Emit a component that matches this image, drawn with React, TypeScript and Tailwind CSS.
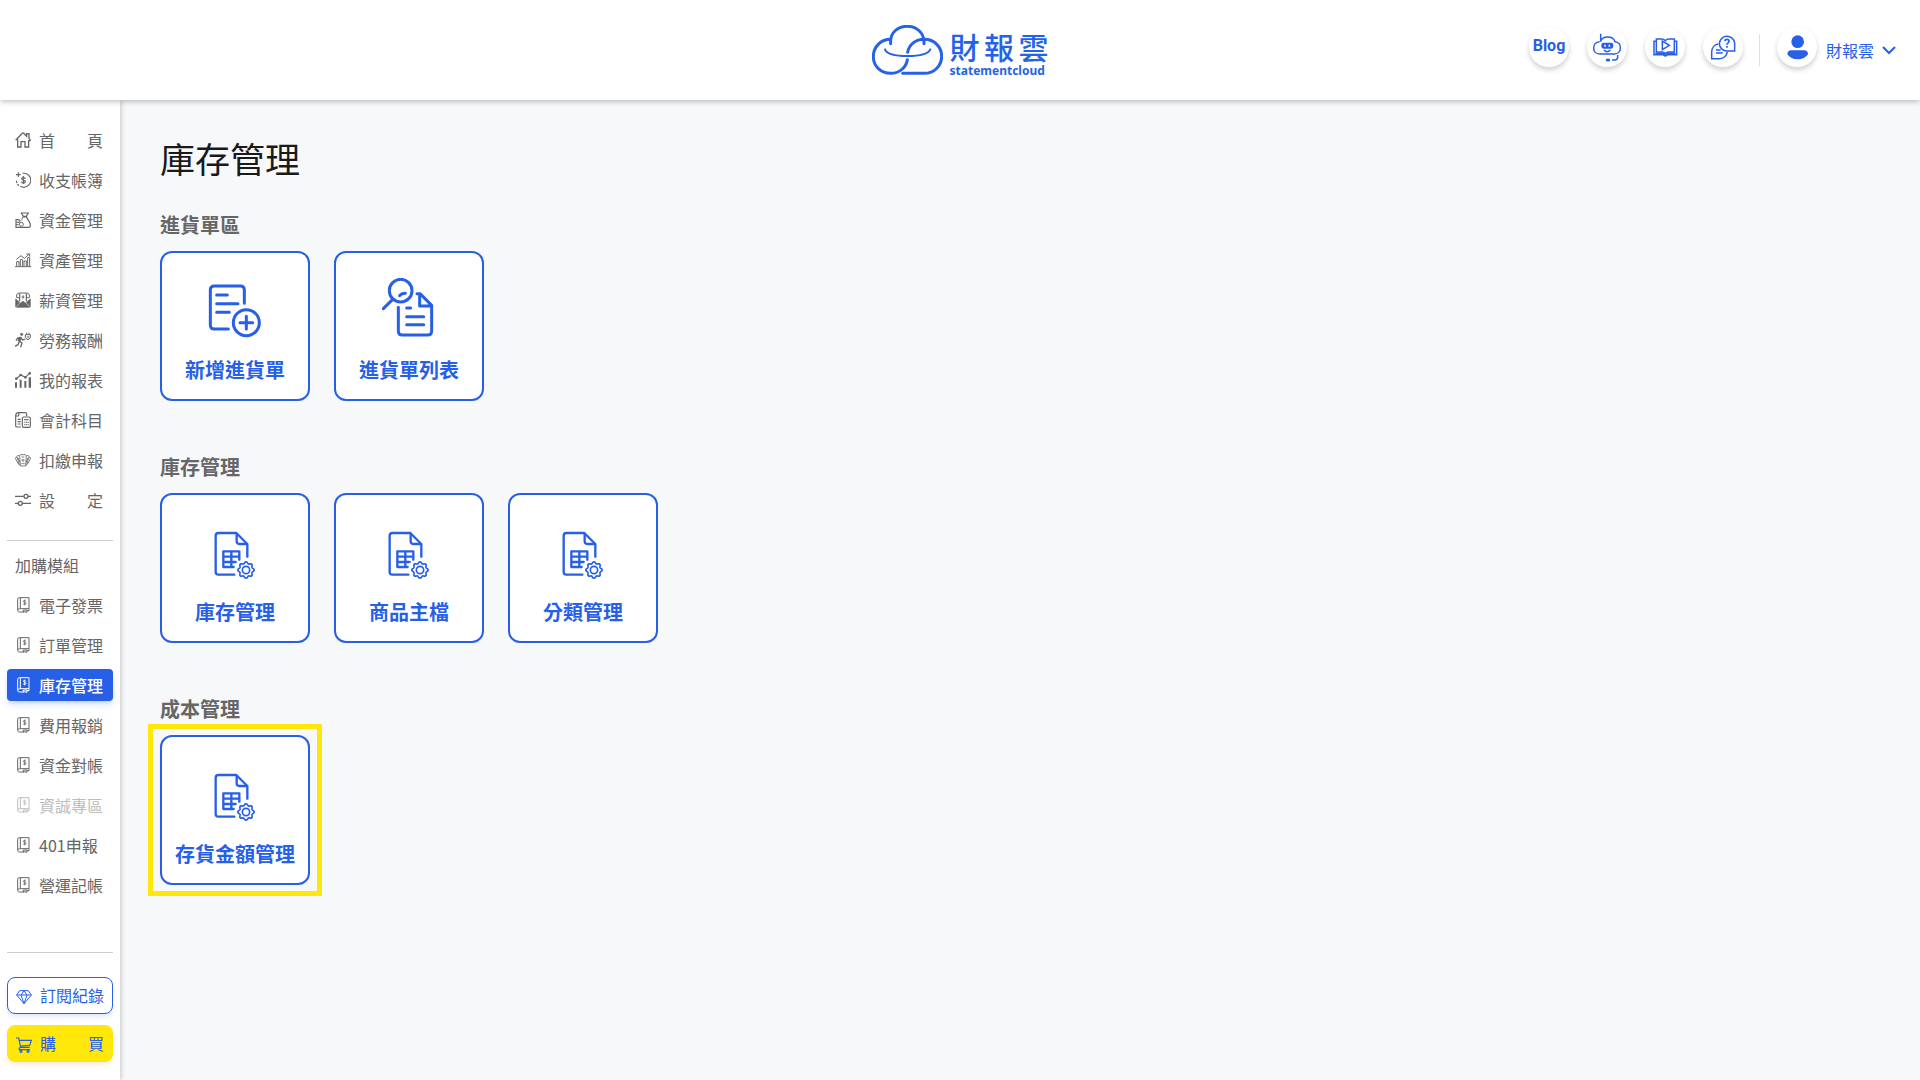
import type { ReactNode } from "react";

type IconName =
  | "home"
  | "ledger"
  | "moneyBag"
  | "assets"
  | "salary"
  | "labor"
  | "report"
  | "subjects"
  | "withholding"
  | "settings"
  | "book";

interface NavItem {
  icon: IconName;
  label: string[];
  state?: "active" | "disabled";
}

const mainNav: NavItem[] = [
  { icon: "home", label: ["首", "頁"] },
  { icon: "ledger", label: ["收支帳簿"] },
  { icon: "moneyBag", label: ["資金管理"] },
  { icon: "assets", label: ["資產管理"] },
  { icon: "salary", label: ["薪資管理"] },
  { icon: "labor", label: ["勞務報酬"] },
  { icon: "report", label: ["我的報表"] },
  { icon: "subjects", label: ["會計科目"] },
  { icon: "withholding", label: ["扣繳申報"] },
  { icon: "settings", label: ["設", "定"] },
];

const moduleNav: NavItem[] = [
  { icon: "book", label: ["電子發票"] },
  { icon: "book", label: ["訂單管理"] },
  { icon: "book", label: ["庫存管理"], state: "active" },
  { icon: "book", label: ["費用報銷"] },
  { icon: "book", label: ["資金對帳"] },
  { icon: "book", label: ["資誠專區"], state: "disabled" },
  { icon: "book", label: ["401申報"] },
  { icon: "book", label: ["營運記帳"] },
];

type CardIcon = "add" | "search" | "sheet";

interface Section {
  title: string;
  cards: { icon: CardIcon; label: string; highlight?: boolean }[];
}

const sections: Section[] = [
  {
    title: "進貨單區",
    cards: [
      { icon: "add", label: "新增進貨單" },
      { icon: "search", label: "進貨單列表" },
    ],
  },
  {
    title: "庫存管理",
    cards: [
      { icon: "sheet", label: "庫存管理" },
      { icon: "sheet", label: "商品主檔" },
      { icon: "sheet", label: "分類管理" },
    ],
  },
  {
    title: "成本管理",
    cards: [{ icon: "sheet", label: "存貨金額管理", highlight: true }],
  },
];

const navIcons: Record<IconName, ReactNode> = {
  home: (
    <g strokeWidth="4">
      <path d="M2 25 22 4q2-2 4 0l9 9V5h7v14l4 6-3 2" />
      <path d="M8 22v23h10V29h12v16h11V24" />
    </g>
  ),
  ledger: (
    <g strokeWidth="3.5">
      <path d="M23 4a21 21 0 1 1-7 39" />
      <path d="M12 41a21 21 0 0 1-8-18" strokeDasharray="7 3" />
      <path d="M10 1v14M3 8h14" />
      <path d="M31 20c-2-5-12-4-11 1 1 5 11 2 11 8 0 5-10 5-12 0M25 12v24" />
    </g>
  ),
  moneyBag: (
    <g strokeWidth="3.5">
      <path d="M19 3h21l-6 10h-9zM23 15h12c3 10 11 15 11 24 0 5-2 7-5 7H3V23h10" />
      <path d="M23 16c-1 5-3 8-7 11M3 31h10M3 38h8M13 23v8" strokeWidth="3" />
      <circle cx="19" cy="37" r="6" strokeWidth="3" />
    </g>
  ),
  assets: (
    <g strokeWidth="3">
      <path d="M0 44h48M5 43V29h7v14M16 43V23h7v20M27 43V27h7v16M38 43V17h6v26" />
      <path d="m4 22 14-11 10 8L43 6M34 6h10v8" />
    </g>
  ),
  salary: (
    <g strokeWidth="2">
      <path d="M2 21 14 31 2 45zM46 21 34 31l12 14zM16 33l8-5 8 5 12 13H4z" fill="currentColor" />
      <path d="M5 17V9q1-6 8-6h22q7 0 8 6v8h-9M5 17h9" strokeWidth="3" />
      <path d="M14 28V4M34 28V4" strokeWidth="3.5" />
      <path d="M24 10v10M20 15h8" strokeWidth="3" />
    </g>
  ),
  labor: (
    <g strokeWidth="4">
      <circle cx="20" cy="7" r="3.5" fill="currentColor" strokeWidth="2" />
      <path d="m17 16-4 11 8 6-4 13M13 28l-4 10-9 5M17 16l-9 2-5 8M18 17l5 7 7-2" />
      <path d="m16 16-4 12" strokeWidth="9" />
      <path d="M31 8h15v8q-2 6-7 7-6-1-8-7zM35 8V2M42 8V2" strokeWidth="3" />
      <path d="M35 15h8M39 12v7" strokeWidth="2" />
    </g>
  ),
  report: (
    <g strokeWidth="3.5">
      <path d="M0 31h6v16H0zM14 23h6v24h-6zM28 27h6v20h-6zM41 16h7v31h-7z" fill="currentColor" stroke="none" />
      <path d="m4 20 13-11 14 7L44 4" />
      <g fill="currentColor" stroke="none">
        <circle cx="4" cy="20" r="4" />
        <circle cx="17" cy="9" r="4" />
        <circle cx="31" cy="16" r="4" />
        <circle cx="44" cy="4" r="4" />
      </g>
    </g>
  ),
  subjects: (
    <g strokeWidth="3.5">
      <path d="M18 45H6q-4 0-4-4V10q1-8 9-8h19q5 0 5 5v5M2 12h8q2-2 2-10M8 22h9M8 29h9M8 36h9" />
      <rect x="22" y="15" width="24" height="31" rx="4" />
      <path d="M27 23h14" />
      <path d="M28 31h3M33 31h3M38 31h3M28 38h3M33 38h3M38 38h3" strokeWidth="4" />
    </g>
  ),
  withholding: (
    <g strokeWidth="2.5">
      <path d="M17 8h14q3 0 3 4l-2 27q0 3-3 3H19q-3 0-3-3l-2-27q0-4 3-4z" />
      <path d="M12 10q-6 0-6 4l7 25 5 3M36 10q6 0 6 4l-7 25-5 3M6 15q-6 1-4 6l9 16M42 15q6 1 4 6l-9 16" />
      <path d="M20 15h8M19 35h10M10 18l4 14M38 18l-4 14" />
      <circle cx="24" cy="25" r="3" />
    </g>
  ),
  settings: (
    <g strokeWidth="4">
      <path d="M0 13h26M39 13h9M0 34h9M22 34h26" />
      <circle cx="33" cy="13" r="6" />
      <circle cx="16" cy="34" r="6" />
    </g>
  ),
  book: (
    <g strokeWidth="3">
      <path d="M8 40V7q0-5 6-5h28v39h-6M16 2v33M8 40q0-5 6-5h28M8 40q0 5 6 5h11" />
      <path d="M25 39v7l5-2 6 2v-7z" />
      <path d="M33 13c-2-4-9-3-8 0 1 4 8 2 8 6 0 5-7 4-9 1M29 8v17" strokeWidth="2.5" />
    </g>
  ),
};

function NavIcon({ name }: { name: IconName }) {
  return (
    <svg viewBox="0 0 48 48" className="size-4 shrink-0" fill="none" stroke="currentColor" aria-hidden="true">
      {navIcons[name]}
    </svg>
  );
}

// eight-lobed outline of the small gear on the sheet icon
const gearPath =
  Array.from({ length: 96 }, (_, i) => {
    const a = (i / 96) * Math.PI * 2;
    const r = 22 + 2.5 * Math.cos(8 * a);
    return `${i ? "L" : "M"}${(123 + r * Math.cos(a)).toFixed(1)} ${(150 + r * Math.sin(a)).toFixed(1)}`;
  }).join("") + "Z";

const cardIcons: Record<CardIcon, ReactNode> = {
  add: (
    <g strokeWidth="9">
      <path d="M118 76V36q0-12-12-12H28q-12 0-12 12v105q0 12 12 12h42" />
      <path d="M35 51h32M35 77h64M35 103h38" />
      <circle cx="124" cy="134" r="39" />
      <path d="M124 115v38M105 134h38" />
    </g>
  ),
  search: (
    <g strokeWidth="9">
      <circle cx="65" cy="38" r="34" />
      <path d="m41 64-28 28M62 53q5-7 17-7" />
      <path d="M58 88v71q0 12 12 12h76q12 0 12-12V82l-35-35h-9M122 50v34h34" />
      <path d="M83 90h12M83 116h51M83 140h51" />
    </g>
  ),
  sheet: (
    <g strokeWidth="7">
      <path d="M127 110V72L94 39H40q-8 0-8 8v109q0 8 8 8h48" />
      <path d="M95 42v22q0 8 8 8h22" />
      <path d="M86 141H55V94h48v25M55 110h48M55 126h37M79 94v46" />
      <path d={gearPath} strokeWidth="5" />
      <circle cx="123" cy="150" r="11" strokeWidth="5" />
    </g>
  ),
};

function Sidebar() {
  const renderItem = (item: NavItem) => (
    <li key={item.label.join("")}>
      <a
        href="#"
        aria-current={item.state === "active" ? "page" : undefined}
        className={`flex h-8 items-center gap-2 rounded px-2 ${
          item.state === "active"
            ? "bg-[#275fe6] font-medium text-white shadow-md shadow-blue-600/20"
            : item.state === "disabled"
              ? "text-[#bdbdbd]"
              : "text-[#666666]"
        }`}
      >
        <NavIcon name={item.icon} />
        <span className="flex w-16 justify-between whitespace-nowrap">
          {item.label.map((part) => (
            <span key={part}>{part}</span>
          ))}
        </span>
      </a>
    </li>
  );

  return (
    <aside className="w-[120px] shrink-0 bg-white px-[7px] pt-6 pb-4 text-base shadow-[1px_0_5px_rgba(0,0,0,0.2)]">
      <nav>
        <ul className="space-y-2">{mainNav.map(renderItem)}</ul>
        <hr className="mt-6 mb-2 border-[#cccccc]" />
        <p className="mb-2 flex h-8 items-center px-2 text-[#666666]">加購模組</p>
        <ul className="space-y-2">{moduleNav.map(renderItem)}</ul>
      </nav>
      <hr className="mt-[51px] mb-6 border-[#cccccc]" />
      <div className="space-y-[11px] text-[#275fe6]">
        <a
          href="#"
          className="flex h-[37px] items-center gap-2 rounded-lg border border-[#275fe6] px-2 pb-[2px] shadow-md shadow-blue-600/10"
        >
          <svg viewBox="0 0 48 48" className="mt-1 size-4 shrink-0" fill="none" stroke="currentColor" strokeWidth="3" aria-hidden="true">
            <path d="M11 5h26l9 13-22 26L2 18zM2 18h44M24 44 15 18l9-13 9 13z" />
          </svg>
          <span className="whitespace-nowrap">訂閱紀錄</span>
        </a>
        <a
          href="#"
          className="flex h-[37px] items-center gap-2 rounded-lg border border-[#ffe70a] bg-[#ffe70a] px-2 pb-[2px] shadow-md shadow-orange-500/10"
        >
          <svg viewBox="0 0 48 48" className="mt-1 size-4 shrink-0" fill="none" stroke="currentColor" strokeWidth="3.5" aria-hidden="true">
            <path d="M0 3h8l6 28h27M10 10h36l-5 15-28 2M14 31q-6 2-4 7h32" />
            <circle cx="15" cy="43" r="3" />
            <circle cx="36" cy="43" r="3" />
          </svg>
          <span className="flex w-16 justify-between">
            <span>購</span>
            <span>買</span>
          </span>
        </a>
      </div>
    </aside>
  );
}

function Logo() {
  return (
    <a href="#" className="flex items-center gap-[7px] text-[#2563e6]" aria-label="財報雲 statementcloud">
      <svg viewBox="0 0 213 150" className="h-[50px] w-[71px]" fill="none" stroke="currentColor" strokeWidth="9" strokeLinecap="round" aria-hidden="true">
        <path d="M56 56C53 20 80 4 106 4s52 18 50 52" />
        <path d="M56 43C26 43 4 66 4 95s23 50 52 50c30 0 47-21 50-41" />
        <path d="M107 82c4-24 24-39 50-39 30 0 52 23 52 51 0 29-23 51-52 51H92" />
        <path d="M39 73c5 13 31 20 67 20s63-7 69-20" strokeWidth="6" />
      </svg>
      <div className="w-[99px] pt-2">
        <div className="flex justify-between font-['Liberation_Sans','Noto_Sans_CJK_TC',sans-serif] text-[30px] leading-[34px] font-medium">
          <span>財</span>
          <span>報</span>
          <span>雲</span>
        </div>
        <div className="font-['Noto_Sans',sans-serif] text-xs leading-[10px] font-bold">statementcloud</div>
      </div>
    </a>
  );
}

function RoundButton({ label, children }: { label: string; children: ReactNode }) {
  return (
    <button
      type="button"
      aria-label={label}
      className="flex size-10 items-center justify-center rounded-full bg-white shadow-[0_3px_5px_rgba(0,0,0,0.18)]"
    >
      {children}
    </button>
  );
}

function Header() {
  return (
    <header className="relative z-10 grid h-[100px] shrink-0 grid-cols-[1fr_auto_1fr] items-center bg-white px-6 shadow-[0_1px_6px_rgba(0,0,0,0.3)]">
      <div />
      <Logo />
      <div className="flex items-center justify-end text-[#275fe6]">
        <div className="flex gap-[18px] pb-[6px]">
          <RoundButton label="Blog">
            <span className="pb-[2px] font-[Roboto,sans-serif] text-base font-bold">Blog</span>
          </RoundButton>
          <RoundButton label="機器人客服">
            <svg viewBox="0 0 120 120" className="size-10" fill="none" stroke="currentColor" strokeWidth="4.5" aria-hidden="true">
              <path d="M41 20v24M41 43c5-17 37-18 43 1 22 1 22 37-2 37H38c-24 0-24-36 0-37" />
              <path d="M49 47h24q6 0 6 9 0 9-8 9H51q-8 0-8-9 0-9 6-9z" fill="currentColor" stroke="none" />
              <path d="M54 53v6M67 53v6" stroke="white" />
              <path d="M51 69q9 10 19 0" />
              <path d="M92 84v6q0 9-9 9h-8" />
              <ellipse cx="63" cy="99" rx="7" ry="4.5" fill="currentColor" stroke="none" />
            </svg>
          </RoundButton>
          <RoundButton label="教學影片">
            <svg viewBox="0 0 120 120" className="size-10" fill="none" stroke="currentColor" strokeWidth="4.5" aria-hidden="true">
              <path d="M50 36H34v39h18q5 0 9 5 4-5 9-5h18V36H72q-7 0-11 5-4-5-11-5z" />
              <path d="M34 43h-7v40h27q3 4 7 4t7-4h27V43h-7M31 79h21q6 0 9 4 3-4 9-4h21" />
              <path d="M52 42v26l21-13z" fill="white" />
            </svg>
          </RoundButton>
          <RoundButton label="常見問題">
            <svg viewBox="0 0 120 120" className="size-10" fill="none" stroke="currentColor" strokeWidth="4.5" aria-hidden="true">
              <path d="M95 72V48a23 22 0 1 0-23 24z" />
              <path d="M46 51C33 53 26 64 26 75v20h24c12 0 21-9 23-20" />
              <path d="M39 69h14M39 78h20" />
              <path d="M66 43c0-8 12-8 12 0 0 5-6 4-6 10M72 57v5" strokeWidth="5" />
            </svg>
          </RoundButton>
        </div>
        <div className="mr-[17px] ml-4 h-8 w-px bg-[#e0e0e0]" />
        <div className="pb-[6px]">
          <RoundButton label="個人資料">
            <svg viewBox="0 0 120 120" className="size-10" fill="currentColor" aria-hidden="true">
              <circle cx="62" cy="44" r="19" />
              <path d="M41 70h42q10 2 10 12-10 15-31 15T31 82q0-10 10-12z" />
            </svg>
          </RoundButton>
        </div>
        <button type="button" className="ml-[9px] flex items-center gap-2 text-base">
          財報雲
          <svg viewBox="0 0 14 9" className="h-[9px] w-[14px]" fill="none" stroke="currentColor" strokeWidth="2" aria-hidden="true">
            <path d="m1 1 6 6 6-6" />
          </svg>
        </button>
      </div>
    </header>
  );
}

export default function App() {
  return (
    <div className="flex min-h-screen flex-col bg-[#f7f8fa] font-['Noto_Sans_CJK_TC',sans-serif]">
      <Header />
      <div className="flex flex-1">
        <Sidebar />
        <main className="flex-1 px-10 pt-8">
          <h1 className="mb-[25px] text-[35px] leading-[52px] text-[#1a1a1a]">庫存管理</h1>
          <div className="space-y-[50px]">
            {sections.map((section) => (
              <section key={section.title}>
                <h2 className="mb-[10px] text-xl leading-8 font-bold text-[#666666]">{section.title}</h2>
                <div className="flex flex-wrap gap-6">
                  {section.cards.map((card) => (
                    <a
                      key={card.label}
                      href="#"
                      className="relative flex size-[150px] flex-col items-center rounded-xl border-2 border-[#275fe6] bg-white pt-[25px] text-[#275fe6]"
                    >
                      <svg viewBox="0 0 180 180" className="size-[60px]" fill="none" stroke="currentColor" strokeLinecap="round" strokeLinejoin="round" aria-hidden="true">
                        {cardIcons[card.icon]}
                      </svg>
                      <span className="mt-4 text-xl leading-8 font-bold whitespace-nowrap">{card.label}</span>
                      {card.highlight && (
                        <span className="pointer-events-none absolute -inset-x-[14px] -inset-y-[13px] border-[5px] border-[#ffe70a]" />
                      )}
                    </a>
                  ))}
                </div>
              </section>
            ))}
          </div>
        </main>
      </div>
    </div>
  );
}
